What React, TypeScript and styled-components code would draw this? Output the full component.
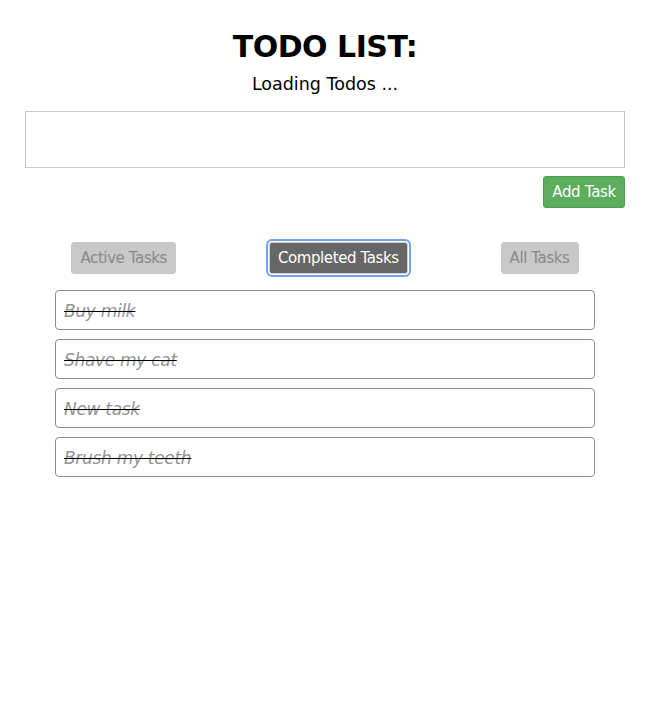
import React from "react";
import styled, { createGlobalStyle } from "styled-components";

const GlobalStyle = createGlobalStyle`
  html, body { margin: 0; padding: 0; background: #fff; }
  body { font-family: "DejaVu Sans", Verdana, sans-serif; color: #000; }
`;

const Page = styled.div`
  width: 600px;
  margin: 0 auto;
  padding-top: 28px;
  display: flex;
  flex-direction: column;
  align-items: center;
`;

const Title = styled.h1`
  margin: 0;
  font-size: 30px;
  font-weight: bold;
  line-height: 38px;
  letter-spacing: -0.5px;
`;

const Status = styled.div`
  margin-top: 6px;
  font-size: 17.5px;
  line-height: 24px;
`;

const TaskInput = styled.textarea`
  margin-top: 15px;
  width: 600px;
  height: 57px;
  box-sizing: border-box;
  border: 1px solid #c8c8c8;
  resize: none;
  outline: none;
`;

const AddRow = styled.div`
  width: 100%;
  display: flex;
  justify-content: flex-end;
  margin-top: 8px;
`;

const AddButton = styled.button`
  height: 32px;
  padding: 0 8px;
  background: #5cad5c;
  color: #fff;
  border: 1px solid #4f9e4f;
  border-radius: 3px;
  font-family: "DejaVu Sans", Verdana, sans-serif;
  font-size: 15px;
  letter-spacing: -0.3px;
`;

const Filters = styled.div`
  width: 100%;
  display: flex;
  justify-content: space-around;
  align-items: center;
  margin-top: 34px;
`;

const FilterButton = styled.button<{ $active?: boolean }>`
  height: 32px;
  padding: 0 8px;
  border-radius: 3px;
  font-family: "DejaVu Sans", Verdana, sans-serif;
  font-size: 15px;
  letter-spacing: -0.4px;
  background: ${(p) => (p.$active ? "#666666" : "#c8c8c8")};
  color: ${(p) => (p.$active ? "#ffffff" : "#8a8a8a")};
  border: 1px solid ${(p) => (p.$active ? "#d0d0d0" : "#c8c8c8")};
  outline: ${(p) => (p.$active ? "2px solid #6ea2f5" : "none")};
  outline-offset: 1px;
`;

const List = styled.ul`
  list-style: none;
  margin: 16px 0 0;
  padding: 0;
  width: 540px;
  display: flex;
  flex-direction: column;
  gap: 9px;
`;

const Item = styled.li`
  height: 40px;
  box-sizing: border-box;
  border: 1px solid #8c8c8c;
  border-radius: 4px;
  padding: 2px 8px 0;
  display: flex;
  align-items: center;
  font-size: 17px;
  font-style: italic;
  color: #939393;
  text-decoration: line-through;
  text-decoration-color: #000;
  letter-spacing: -0.3px;
`;

const todos = ["Buy milk", "Shave my cat", "New task", "Brush my teeth"];

export default function App() {
  return (
    <>
      <GlobalStyle />
      <Page>
        <Title>TODO LIST:</Title>
        <Status>Loading Todos ...</Status>
        <TaskInput />
        <AddRow>
          <AddButton>Add Task</AddButton>
        </AddRow>
        <Filters>
          <FilterButton>Active Tasks</FilterButton>
          <FilterButton $active>Completed Tasks</FilterButton>
          <FilterButton>All Tasks</FilterButton>
        </Filters>
        <List>
          {todos.map((t) => (
            <Item key={t}>{t}</Item>
          ))}
        </List>
      </Page>
    </>
  );
}
